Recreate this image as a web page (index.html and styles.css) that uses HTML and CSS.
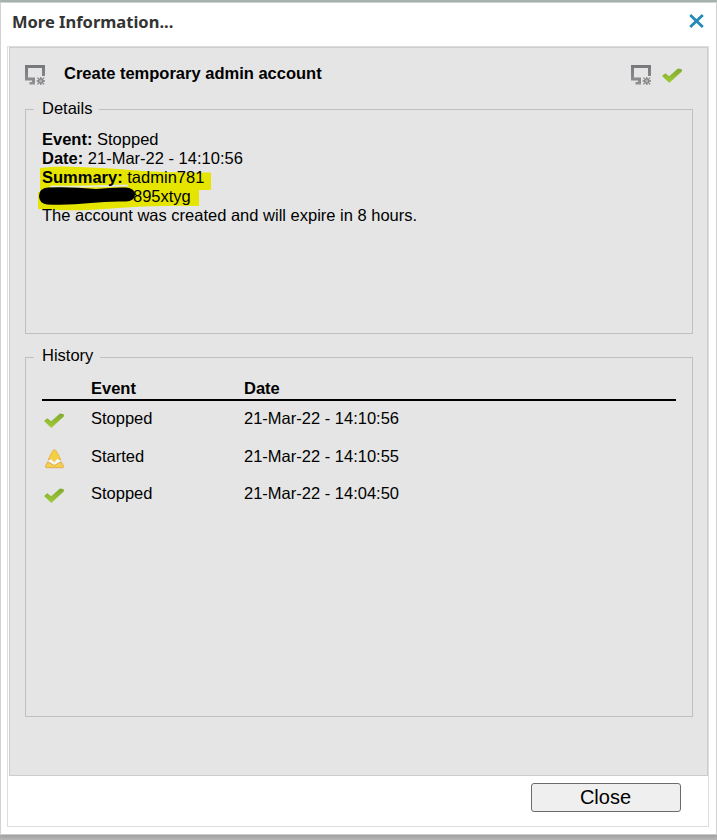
FILE: index.html
```html
<!DOCTYPE html>
<html lang="en">
<head>
<meta charset="utf-8">
<title>More Information...</title>
<link rel="stylesheet" href="styles.css">
</head>
<body>
<svg class="defs" width="0" height="0">
  <defs>
    <linearGradient id="green" x1="0" y1="0" x2="0" y2="1"><stop offset="0" stop-color="#7fa92d"/><stop offset="1" stop-color="#a2cc3a"/></linearGradient>
    <linearGradient id="grey" x1="0" y1="0" x2="0" y2="1"><stop offset="0" stop-color="#77787b"/><stop offset="1" stop-color="#909194"/></linearGradient>
    <symbol id="check" viewBox="0 0 20 15"><path d="M0 8 3.3 5.2 7.2 8.2 16 .4 19.8 1.2V3.6L7.3 15Z" fill="url(#green)"/></symbol>
    <symbol id="monitor" viewBox="0 0 20 20">
      <path d="M0 0H20V11H17V3H3V12.5H10V19.5H4.5V17H7V15.5H0Z" fill="url(#grey)"/>
      <path d="M15.8 12V20M11.6 16H20M12.4 12.6 19.2 19.4M19.2 12.6 12.4 19.4" stroke="#858689" stroke-width="1.3"/>
      <circle cx="15.8" cy="16" r="2.2" fill="#b2b2b4" stroke="#77787b"/>
    </symbol>
    <symbol id="started" viewBox="0 0 19 20">
      <path d="M9.5.6C8 .6 4.8 7 3.2 11L6 9.8 9.3 13.2 12.6 9.6 15.8 11C14.2 7 11 .6 9.5.6Z" fill="#f4d23f" stroke="#e4a746" stroke-width=".8"/>
      <path d="M6 10 9.3 13.2 12.6 9.6 15 12 9.5 15.6 3.6 12Z" fill="#faf7ec"/>
      <path d="M2.5 12.8 9.4 16.5 16.3 12.8 18.6 17.4Q18.6 18.7 17.6 18.7H1.6Q.4 18.7.6 17.2Z" fill="#f3d14a" stroke="#df9f45" stroke-width=".8"/>
    </symbol>
  </defs>
</svg>
<div class="dialog">
  <header class="titlebar">
    <h1 class="title">More Information...</h1>
    <svg class="dismiss" viewBox="0 0 15 14"><path d="M1.2 1 13.8 13M13.8 1 1.2 13" stroke="#2489b9" stroke-width="2.8" fill="none"/></svg>
  </header>
  <main class="frame">
    <section class="panel">
      <div class="heading">
        <svg class="monitor"><use href="#monitor"/></svg>
        <h2 class="name">Create temporary admin account</h2>
        <svg class="monitor"><use href="#monitor"/></svg>
        <svg class="check"><use href="#check"/></svg>
      </div>
      <fieldset class="group details">
        <legend>Details</legend>
        <div class="info">
          <svg class="marker" viewBox="0 0 176 46"><path d="M2 3Q18 .5 40 2Q75 3 105 6Q140 8 173 7.500V25H161V41Q125 40 80 43Q35 47 0 44V27H2Z" fill="#e6e500"/><path d="M12 21.500Q50 22 90 20.500" stroke="#e6e6dc" stroke-width="2" fill="none"/></svg>
          <p><b>Event:</b> Stopped</p>
          <p><b>Date:</b> 21-Mar-22 - 14:10:56</p>
          <p><b>Summary:</b> tadmin781</p>
          <p class="code">895xtyg</p>
          <p>The account was created and will expire in 8 hours.</p>
          <svg class="redaction" viewBox="0 0 99 20"><path d="M10 1.5Q35 .8 58 3Q76 1 88 1.5Q97 2 97 9Q96 15 88 15.5Q70 15 53 17Q30 19.500 9 18.5Q1 17 1 10Q1 2 10 1.5Z"/></svg>
        </div>
      </fieldset>
      <fieldset class="group history">
        <legend>History</legend>
        <div class="row head"><span></span><b>Event</b><b>Date</b></div>
        <div class="row"><svg class="check"><use href="#check"/></svg><span>Stopped</span><span>21-Mar-22 - 14:10:56</span></div>
        <div class="row"><svg class="started"><use href="#started"/></svg><span>Started</span><span>21-Mar-22 - 14:10:55</span></div>
        <div class="row"><svg class="check"><use href="#check"/></svg><span>Stopped</span><span>21-Mar-22 - 14:04:50</span></div>
      </fieldset>
    </section>
    <footer class="actions"><button class="close">Close</button></footer>
  </main>
</div>
</body>
</html>
```
FILE: styles.css
```css
* { box-sizing: border-box; }
body {
  margin: 0;
  height: 840px;
  padding-top: 2px;
  overflow: hidden;
  background: linear-gradient(#a9b8b6 0 2px, #b0b0b0 2px 836px, #b8b8b8);
  font: 16.5px/19px "Liberation Sans", Arial, sans-serif;
  color: #000;
}
h1, h2, p { margin: 0; }
svg { display: block; }
.defs { position: absolute; }
.dialog {
  height: 833px;
  padding: 0 7px;
  background: #fff;
  border: 1px solid #d2d2d2;
  border-bottom-color: #ccc;
  box-shadow: 0 1px 5px #999;
}
.titlebar {
  height: 43px;
  display: flex;
  justify-content: space-between;
  align-items: flex-start;
  padding: 10px 5px 0 4px;
}
.title {
  font: bold 16.5px/18px "Noto Sans", "DejaVu Sans", sans-serif;
  color: #333;
}
.dismiss { width: 15px; height: 14px; margin-top: 1px; }
.frame {
  height: 781px;
  margin: 0 0 0 -1px;
  border: 1px solid #ddd;
  padding-left: 1px;
}
.panel {
  height: 729px;
  padding: 16px 14px 0 15px;
  background: #e5e5e5;
  border: 1px solid #ccc;
}
.heading { display: flex; height: 35px; align-items: flex-start; }
.monitor { width: 20px; height: 20px; margin-top: 1px; }
.check { width: 20px; height: 15px; }
.name { font-size: 16.5px; line-height: 19px; margin: 0 auto 0 19px; }
.heading .check { margin: 4px 11px 0 11px; }
.group {
  min-width: 0;
  margin: 0;
  padding: 0 16px 0 16px;
  border: 1px solid #bfbfbf;
}
legend { padding: 0 7px 0 8px; margin-left: -8px; height: 21px; }
.details { height: 235px; }
.info { position: relative; padding-top: 10px; }
.info p { position: relative; height: 19px; white-space: nowrap; }
.info .code { padding-left: 91px; }
.marker { position: absolute; left: -4px; top: 45px; width: 176px; height: 46px; }
.redaction { position: absolute; left: -4px; top: 66px; width: 99px; height: 20px; }
.history { height: 371px; margin-top: 12px; }
.history legend { height: 23px; }
.row {
  display: grid;
  grid-template-columns: 49px 153px 1fr;
  height: 37.5px;
  padding-top: 8px;
}
.row > svg { margin: 4px 0 0 2px; }
.row > .started { width: 19px; height: 20px; margin: 2px 0 0 3px; }
.row.head { height: 32px; padding-top: 10px; border-bottom: 2px solid #000; }
.actions { padding: 7px 27px 0 0; display: flex; justify-content: flex-end; }
.close {
  width: 150px;
  height: 29px;
  padding: 0 1px 1px 0;
  border: 1px solid #6b6b6b;
  border-radius: 3px;
  background: #efefef;
  font: 20px/26px "Liberation Sans", Arial, sans-serif;
  color: #000;
}
```
